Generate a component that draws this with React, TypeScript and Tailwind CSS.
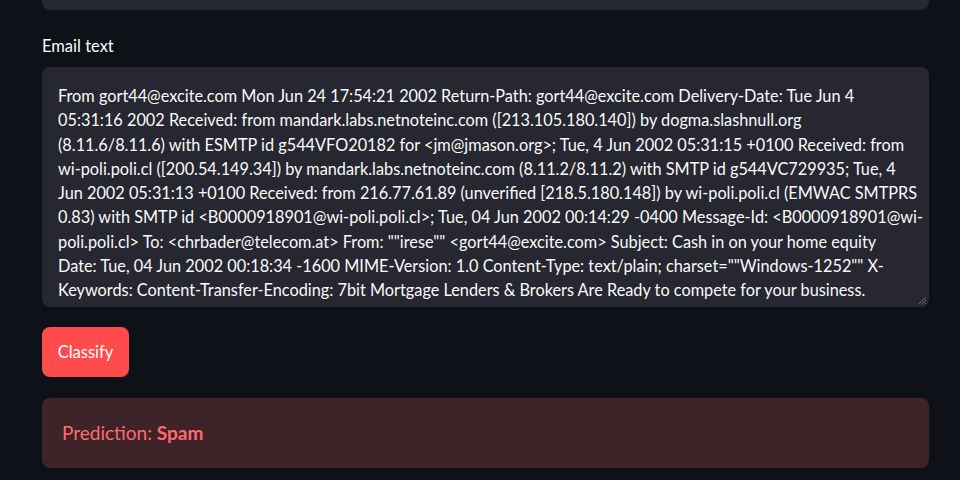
import React from 'react';

const lines = [
  'From gort44@excite.com Mon Jun 24 17:54:21 2002 Return-Path: gort44@excite.com Delivery-Date: Tue Jun 4',
  '05:31:16 2002 Received: from mandark.labs.netnoteinc.com ([213.105.180.140]) by dogma.slashnull.org',
  '(8.11.6/8.11.6) with ESMTP id g544VFO20182 for <jm@jmason.org>; Tue, 4 Jun 2002 05:31:15 +0100 Received: from',
  'wi-poli.poli.cl ([200.54.149.34]) by mandark.labs.netnoteinc.com (8.11.2/8.11.2) with SMTP id g544VC729935; Tue, 4',
  'Jun 2002 05:31:13 +0100 Received: from 216.77.61.89 (unverified [218.5.180.148]) by wi-poli.poli.cl (EMWAC SMTPRS',
  '0.83) with SMTP id <B0000918901@wi-poli.poli.cl>; Tue, 04 Jun 2002 00:14:29 -0400 Message-Id: <B0000918901@wi-',
  'poli.poli.cl> To: <chrbader@telecom.at> From: ""irese"" <gort44@excite.com> Subject: Cash in on your home equity',
  'Date: Tue, 04 Jun 2002 00:18:34 -1600 MIME-Version: 1.0 Content-Type: text/plain; charset=""Windows-1252"" X-',
  'Keywords: Content-Transfer-Encoding: 7bit Mortgage Lenders & Brokers Are Ready to compete for your business.',
];

export default function App() {
  return (
    <div className="min-h-screen bg-[#0e1117] text-[#fafafa] font-['Lato','Noto_Sans',sans-serif]">
      <div className="ml-[42px] w-[887px] flex flex-col">
        {/* previous widget, cut off by the top edge */}
        <div className="h-[10px] bg-[#262730] rounded-b-lg" />

        <label className="mt-[25px] mb-[10px] text-[16.5px] leading-[22px]">Email text</label>

        <div className="relative h-[240px] bg-[#262730] rounded-lg overflow-hidden pl-4 pr-3 pt-[17px]">
          {lines.map((l, i) => (
            <div key={i} className="whitespace-nowrap text-[16.3px] leading-[24.25px]">
              {l}
            </div>
          ))}
          <svg className="absolute right-[2px] bottom-[2px]" width="9" height="9" viewBox="0 0 9 9">
            <path d="M8 1L1 8M8 4L4 8M8 7L7 8" stroke="#6b6c75" strokeWidth="1" />
          </svg>
        </div>

        <div className="mt-5">
          <button className="h-[50px] w-[87px] rounded-lg bg-[#ff4b4b] text-white text-[16.5px]">
            Classify
          </button>
        </div>

        <div className="mt-[21px] h-[70px] rounded-lg bg-[#3e2328] px-5 flex items-center text-[19px] text-[#ff6c6c]">
          <span>
            Prediction: <span className="font-bold">Spam</span>
          </span>
        </div>
      </div>
    </div>
  );
}
